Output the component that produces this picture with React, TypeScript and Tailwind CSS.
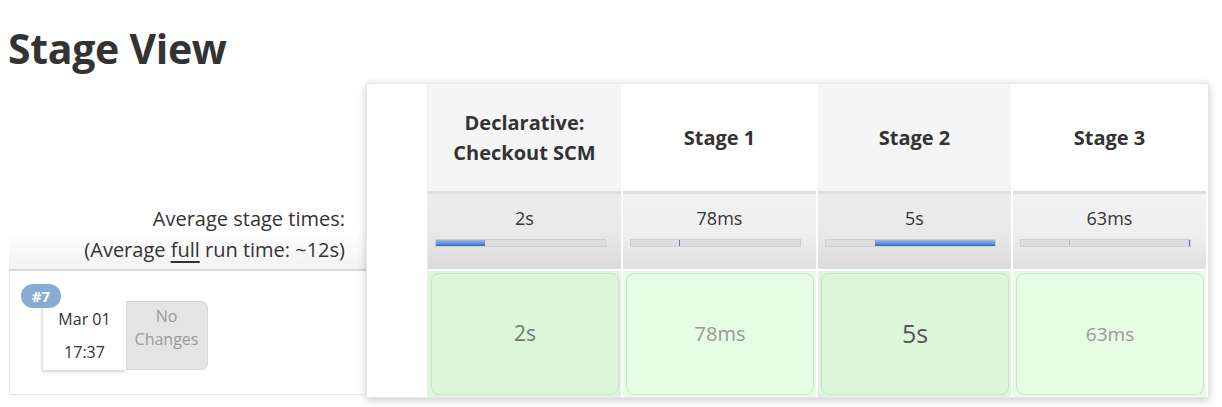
import React from "react";

type Stage = {
  name: string[];
  avg: string;
  headBg: string;
  avgBg: string;
  cellBg: string;
  textCls: string;
  bar: React.ReactNode;
};

const Fill = ({ w }: { w: number }) => (
  <div
    className="h-full bg-gradient-to-b from-[#9ab8e0] via-[#6f97d6] to-[#2f66cf] flex-none"
    style={{ width: w }}
  />
);

const stages: Stage[] = [
  {
    name: ["Declarative:", "Checkout SCM"],
    avg: "2s",
    headBg: "bg-[#f5f5f5]",
    avgBg: "from-[#ececec] via-[#e9e9e9] to-[#dadada]",
    cellBg: "bg-[#dcf6dc]",
    textCls: "text-[21px] text-[#777]",
    bar: <Fill w={49} />,
  },
  {
    name: ["Stage 1"],
    avg: "78ms",
    headBg: "bg-white",
    avgBg: "from-[#f2f2f2] via-[#efefef] to-[#e0e0e0]",
    cellBg: "bg-[#e4fde4]",
    textCls: "text-[20px] text-[#999]",
    bar: (
      <>
        <div className="w-[48px] flex-none" />
        <div className="w-[1px] h-full bg-[#5b7fbf] flex-none" />
      </>
    ),
  },
  {
    name: ["Stage 2"],
    avg: "5s",
    headBg: "bg-[#f5f5f5]",
    avgBg: "from-[#ececec] via-[#e9e9e9] to-[#dadada]",
    cellBg: "bg-[#dcf6dc]",
    textCls: "text-[25px] text-[#555]",
    bar: (
      <>
        <div className="w-[49px] flex-none" />
        <Fill w={120} />
      </>
    ),
  },
  {
    name: ["Stage 3"],
    avg: "63ms",
    headBg: "bg-white",
    avgBg: "from-[#f2f2f2] via-[#efefef] to-[#e0e0e0]",
    cellBg: "bg-[#e4fde4]",
    textCls: "text-[19px] text-[#999]",
    bar: (
      <>
        <div className="w-[48px] flex-none" />
        <div className="w-[1px] h-full bg-[#bcbcbc] flex-none" />
        <div className="flex-1" />
        <div className="w-[1px] h-full bg-[#3f6fd0] flex-none" />
      </>
    ),
  },
];

export default function App() {
  return (
    <div className="w-[1222px] h-[407px] overflow-hidden bg-white text-[#333] font-['Open_Sans','Noto_Sans',sans-serif]">
      <h2 className="pl-[8px] pt-[24px] text-[41px] leading-[48px] font-bold tracking-[-0.3px] text-[#333]">
        Stage View
      </h2>
      <div className="flex items-start pl-[9px] mt-[11px]">
        {/* left column */}
        <div className="w-[357px] flex-none flex flex-col">
          <div className="h-[108px]" />
          <div className="h-[78px] pt-[12px] pr-[21px] text-right text-[20px] leading-[31px] text-[#333] bg-gradient-to-b from-white via-white to-[#f3f3f3]">
            <div>Average stage times:</div>
            <div>
              (Average <span className="underline underline-offset-[4px]">full</span> run time: ~12s)
            </div>
          </div>
          <div className="h-[2px] bg-[#d8d8d8]" />
          <div className="relative h-[124px] border-l border-b border-[#e6e6e6]">
            <div className="absolute left-[11px] top-[13px] z-10 w-[40px] h-[24px] rounded-full bg-[#88abd3] text-white text-[15px] font-bold leading-[24px] text-center">
              #7
            </div>
            <div className="flex pl-[33px] pt-[30px]">
              <div className="relative w-[83px] h-[69px] bg-white shadow-[-1px_2px_3px_rgba(0,0,0,0.18)] flex flex-col items-center justify-center text-[16px] leading-[33px] text-[#333]">
                <div>Mar 01</div>
                <div>17:37</div>
              </div>
              <div className="w-[82px] h-[69px] bg-[#e4e4e4] border border-l-0 border-[#d9d9d9] rounded-r-[7px] flex flex-col items-center pt-[3px] text-[16px] leading-[23px] text-[#999]">
                <div>No</div>
                <div>Changes</div>
              </div>
            </div>
          </div>
        </div>

        {/* right table */}
        <div className="flex-none border border-[#e6e6e6] bg-white shadow-[0_2px_8px_rgba(0,0,0,0.22)] flex">
          <div className="w-[61px] border-r border-[#ededed] bg-white" />
          <div className="flex gap-[2px] pr-[2px]">
            {stages.map((s, i) => (
              <div key={i} className="w-[193px] flex flex-col">
                <div
                  className={`h-[107px] ${s.headBg} flex flex-col items-center justify-center text-[20px] leading-[30px] font-bold text-[#333] text-center`}
                >
                  {s.name.map((n) => (
                    <div key={n}>{n}</div>
                  ))}
                </div>
                <div
                  className={`h-[78px] border-t-[3px] border-[#dedede] bg-gradient-to-b ${s.avgBg} flex flex-col pt-[9px]`}
                >
                  <div className="text-center text-[18px] leading-[30px] text-[#333]">{s.avg}</div>
                  <div className="mt-[6px] ml-[7px] w-[171px] h-[8px] bg-[#dedede] border border-[#cfcfcf] flex overflow-hidden">
                    {s.bar}
                  </div>
                </div>
                <div className={`mt-[2px] h-[126px] ${s.cellBg} pl-[3px] pr-[2px] pt-[2px] pb-[2px]`}>
                  <div
                    className={`h-full rounded-[8px] border border-[#d2ddd2] flex items-center justify-center ${s.textCls}`}
                  >
                    {s.avg}
                  </div>
                </div>
              </div>
            ))}
          </div>
        </div>
      </div>
    </div>
  );
}
